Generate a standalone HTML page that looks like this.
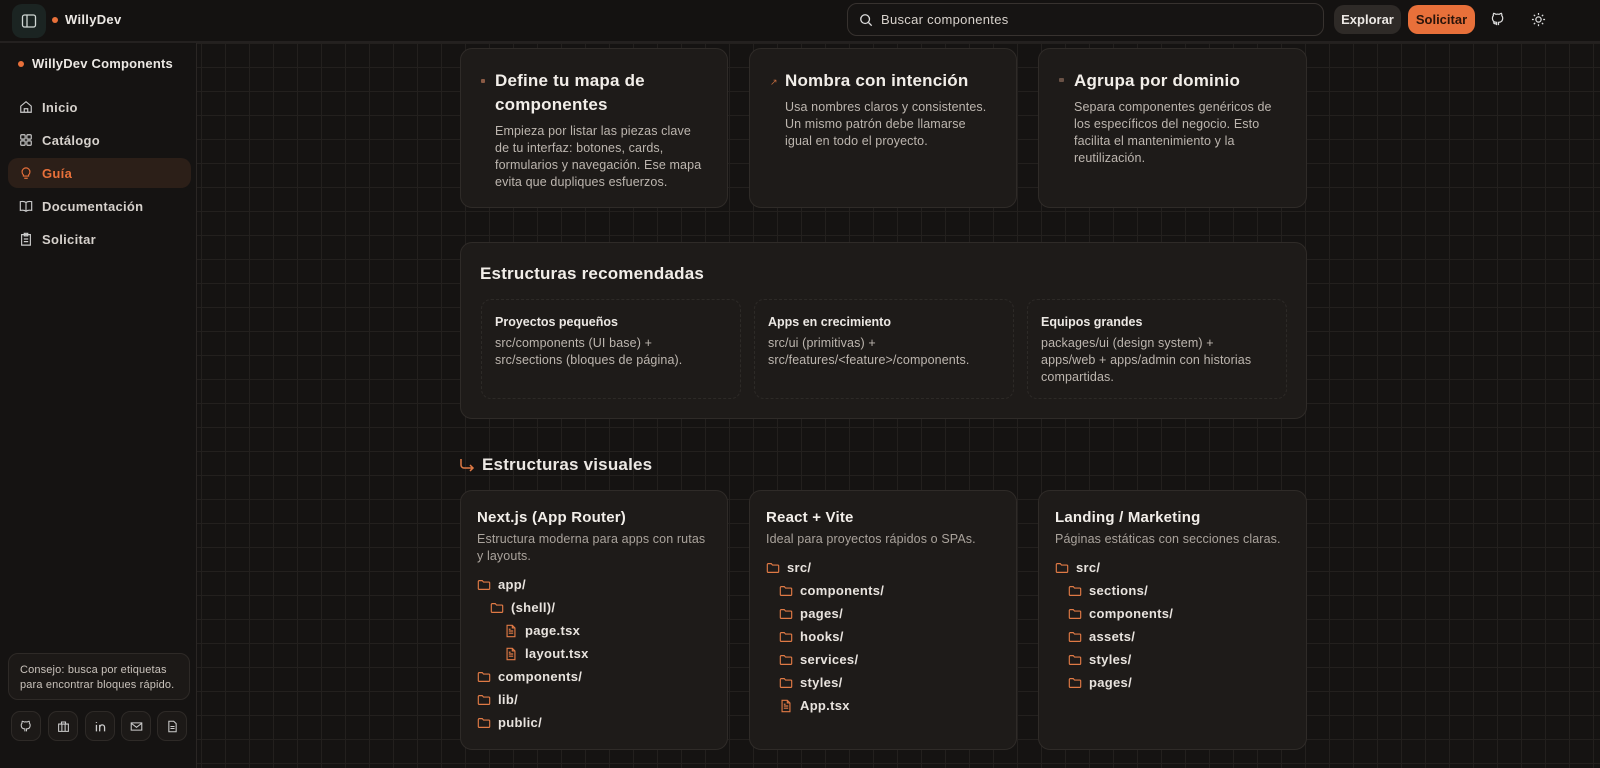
<!DOCTYPE html>
<html><head><meta charset="utf-8"><style>
*{box-sizing:border-box;margin:0;padding:0}
body{width:1600px;height:768px;overflow:hidden;background:#141211;font-family:"Liberation Sans",sans-serif;color:#ece8e4;position:relative}
.hdr{position:absolute;left:0;top:0;width:1600px;height:43px;background:#141211;border-bottom:2px solid #242120;z-index:2}
.side{position:absolute;left:0;top:43px;width:197px;height:725px;background:#151312;border-right:1px solid #2a2624}
.main{position:absolute;left:197px;top:43px;right:0;bottom:0;background-color:#151312;background-image:linear-gradient(#23201e 1px,transparent 1px),linear-gradient(90deg,#23201e 1px,transparent 1px);background-size:24px 24px;background-position:4px 0}
.card{position:absolute;background:#1e1b19;border:1px solid #2f2b28;border-radius:12px}
.dot{display:inline-block;width:6px;height:6px;border-radius:50%;background:#e8703a}
.nav{position:absolute;left:8px;width:183px;height:30px;display:flex;align-items:center;padding-left:11px;font-size:13px;font-weight:bold;color:#d6d1cc;border-radius:10px;letter-spacing:.3px}
.nav svg{margin-right:9px}
h3{font-size:17px;font-weight:bold;color:#f2eee9;line-height:24px;letter-spacing:.2px}
p.b{font-size:12.5px;line-height:17px;color:#bdb6af;letter-spacing:.12px}
.sub{position:absolute;top:56px;width:260px;height:100px;border:1px dashed #2d2a27;border-radius:10px;padding:15px 13px}
.sub h4{font-size:12.5px;font-weight:bold;margin-bottom:6px}
.tree{font-size:13px;font-weight:bold;line-height:23px;color:#e8e3de;letter-spacing:.3px}
.tree div{display:flex;align-items:center;height:23px}
.tree svg{margin-right:7px}
.ib{position:absolute;top:711px;width:30px;height:30px;border:1px solid #2e2a27;border-radius:9px;background:#1c1917;display:flex;align-items:center;justify-content:center}
</style></head><body>
<svg width="0" height="0" style="position:absolute"><defs>
<symbol id="fo" viewBox="0 0 16 16"><path d="M1.5 4a1 1 0 0 1 1-1h3.5l1.5 1.7h6a1 1 0 0 1 1 1V12a1 1 0 0 1-1 1h-11a1 1 0 0 1-1-1z" fill="none" stroke="#e07a45" stroke-width="1.3"/></symbol>
<symbol id="fi" viewBox="0 0 16 16"><path d="M3.5 1.5h6l3 3v10h-9z M9.5 1.5v3h3 M5.5 8h5 M5.5 10.5h5 M5.5 6h2" fill="none" stroke="#e07a45" stroke-width="1.3"/></symbol>
</defs></svg>
<div class="hdr">
 <div style="position:absolute;left:12px;top:4px;width:34px;height:34px;border-radius:10px;background:#1b2422;display:flex;align-items:center;justify-content:center"><svg width="16" height="16" viewBox="0 0 16 16"><rect x="1.5" y="2" width="13" height="12" rx="2" fill="none" stroke="#cfd6d4" stroke-width="1.3"/><path d="M6 2v12" stroke="#cfd6d4" stroke-width="1.3"/></svg></div>
 <span class="dot" style="position:absolute;left:52px;top:17px"></span>
 <div style="position:absolute;left:65px;top:12px;font-size:13px;font-weight:bold;letter-spacing:.3px">WillyDev</div>
 <div style="position:absolute;left:847px;top:3px;width:477px;height:33px;border:1px solid #37322f;border-radius:10px;background:#161413;display:flex;align-items:center;padding-left:11px;font-size:13px;color:#d8d2cc;letter-spacing:.3px"><svg width="14" height="14" viewBox="0 0 16 16" style="margin-right:8px"><circle cx="7" cy="7" r="5" fill="none" stroke="#ddd" stroke-width="1.5"/><path d="M11 11l3.5 3.5" stroke="#ddd" stroke-width="1.5"/></svg>Buscar componentes</div>
 <div style="position:absolute;left:1334px;top:5px;width:67px;height:29px;border-radius:10px;background:#2e2a27;font-size:13px;font-weight:bold;display:flex;align-items:center;justify-content:center">Explorar</div>
 <div style="position:absolute;left:1408px;top:5px;width:67px;height:29px;border-radius:10px;background:#e8703a;font-size:13px;font-weight:bold;color:#2a140a;display:flex;align-items:center;justify-content:center">Solicitar</div>
 <svg style="position:absolute;left:1491px;top:12px" width="15" height="15" viewBox="0 0 16 16"><path d="M6 14v-3c-3 0-4.5-1.5-4.5-4.5 0-1 .4-2 1-2.6-.2-.8 0-1.8.3-2.4 1 0 1.8.5 2.4 1a7 7 0 0 1 3.6 0c.6-.5 1.4-1 2.4-1 .3.6.5 1.6.3 2.4.6.6 1 1.6 1 2.6 0 3-1.5 4.5-4.5 4.5v3 M6 12.5c-2 .5-3-.5-3.5-1.5" fill="none" stroke="#ddd" stroke-width="1.3"/></svg>
 <svg style="position:absolute;left:1531px;top:12px" width="15" height="15" viewBox="0 0 16 16"><circle cx="8" cy="8" r="2.8" fill="none" stroke="#ddd" stroke-width="1.3"/><path d="M8 1v2M8 13v2M1 8h2M13 8h2M3 3l1.4 1.4M11.6 11.6L13 13M3 13l1.4-1.4M11.6 4.4L13 3" stroke="#ddd" stroke-width="1.3"/></svg>
</div>
<div class="side">
 <span class="dot" style="position:absolute;left:18px;top:18px"></span>
 <div style="position:absolute;left:32px;top:13px;font-size:13px;font-weight:bold;letter-spacing:.2px">WillyDev Components</div>
 <div class="nav" style="top:49px"><svg width="14" height="14" viewBox="0 0 16 16"><path d="M2 7l6-5 6 5v7H2z M6 14v-4h4v4" fill="none" stroke="#ccc" stroke-width="1.3"/></svg>Inicio</div>
 <div class="nav" style="top:82px"><svg width="14" height="14" viewBox="0 0 16 16"><g fill="none" stroke="#ccc" stroke-width="1.3"><rect x="2" y="2" width="5" height="5" rx="1"/><rect x="9" y="2" width="5" height="5" rx="1"/><rect x="2" y="9" width="5" height="5" rx="1"/><rect x="9" y="9" width="5" height="5" rx="1"/></g></svg>Catálogo</div>
 <div class="nav" style="top:115px;background:#2c1f18;color:#e8703a"><svg width="14" height="14" viewBox="0 0 16 16"><path d="M5 10a4.5 4.5 0 1 1 6 0v1.5H5z M6 14h4" fill="none" stroke="#e8703a" stroke-width="1.3"/></svg>Guía</div>
 <div class="nav" style="top:148px"><svg width="14" height="14" viewBox="0 0 16 16"><path d="M8 4c-2-1.5-4-1.5-6.5-1v10c2.5-.5 4.5-.5 6.5 1 2-1.5 4-1.5 6.5-1V3C12 2.5 10 2.5 8 4zv10" fill="none" stroke="#ccc" stroke-width="1.3"/></svg>Documentación</div>
 <div class="nav" style="top:181px"><svg width="14" height="14" viewBox="0 0 16 16"><path d="M3 3h10v12H3z M6 1.5h4v3H6z M5.5 8h5M5.5 11h5" fill="none" stroke="#ccc" stroke-width="1.3"/></svg>Solicitar</div>
 <div style="position:absolute;left:8px;top:610px;width:182px;height:47px;border:1px solid #2e2a27;border-radius:10px;background:#1c1917;padding:9px 11px;font-size:11px;line-height:15px;color:#c9c2bb;letter-spacing:.15px">Consejo: busca por etiquetas para encontrar bloques rápido.</div>
</div>
<div class="ib" style="left:11px"><svg width="13" height="13" viewBox="0 0 16 16"><path d="M6 14v-3c-3 0-4.5-1.5-4.5-4.5 0-1 .4-2 1-2.6-.2-.8 0-1.8.3-2.4 1 0 1.8.5 2.4 1a7 7 0 0 1 3.6 0c.6-.5 1.4-1 2.4-1 .3.6.5 1.6.3 2.4.6.6 1 1.6 1 2.6 0 3-1.5 4.5-4.5 4.5v3" fill="none" stroke="#ccc" stroke-width="1.3"/></svg></div>
<div class="ib" style="left:48px"><svg width="13" height="13" viewBox="0 0 16 16"><path d="M2 5h12v9H2z M5.5 5V2.5h5V5 M6 5v9M10 5v9" fill="none" stroke="#ccc" stroke-width="1.3"/></svg></div>
<div class="ib" style="left:85px"><svg width="13" height="13" viewBox="0 0 16 16"><path d="M3 6v8M3 2.5v1M7 14V6M7 9.5c0-2 1.5-3.5 3-3.5s3 1 3 3v5" fill="none" stroke="#ccc" stroke-width="1.6"/></svg></div>
<div class="ib" style="left:121px"><svg width="13" height="13" viewBox="0 0 16 16"><path d="M1.5 3.5h13v9h-13z M1.5 4l6.5 5 6.5-5" fill="none" stroke="#ccc" stroke-width="1.3"/></svg></div>
<div class="ib" style="left:157px"><svg width="13" height="13" viewBox="0 0 16 16"><path d="M3.5 1.5h6l3 3v10h-9z M5.5 8h5M5.5 10.5h5" fill="none" stroke="#ccc" stroke-width="1.3"/></svg></div>

<div class="main"></div>

<div class="card" style="left:460px;top:48px;width:268px;height:160px;padding:20px 14px 0 34px">
 <span style="position:absolute;left:20px;top:30px;width:4px;height:4px;background:#8a5a44;border-radius:1px"></span>
 <h3>Define tu mapa de<br>componentes</h3>
 <p class="b" style="margin-top:6px">Empieza por listar las piezas clave<br>de tu interfaz: botones, cards,<br>formularios y navegación. Ese mapa<br>evita que dupliques esfuerzos.</p>
</div>
<div class="card" style="left:749px;top:48px;width:268px;height:160px;padding:20px 20px 0 35px">
 <span style="position:absolute;left:20px;top:28px;font-size:9px;color:#c06a3e">↗</span>
 <h3>Nombra con intención</h3>
 <p class="b" style="margin-top:6px">Usa nombres claros y consistentes.<br>Un mismo patrón debe llamarse<br>igual en todo el proyecto.</p>
</div>
<div class="card" style="left:1038px;top:48px;width:269px;height:160px;padding:20px 20px 0 35px">
 <span style="position:absolute;left:20px;top:29px;width:5px;height:4px;background:#6a5246;border-radius:1px"></span>
 <h3>Agrupa por dominio</h3>
 <p class="b" style="margin-top:6px">Separa componentes genéricos de<br>los específicos del negocio. Esto<br>facilita el mantenimiento y la<br>reutilización.</p>
</div>

<div class="card" style="left:460px;top:242px;width:847px;height:177px">
 <h3 style="position:absolute;left:19px;top:19px">Estructuras recomendadas</h3>
 <div class="sub" style="left:20px"><h4>Proyectos pequeños</h4><p class="b">src/components (UI base) +<br>src/sections (bloques de página).</p></div>
 <div class="sub" style="left:293px"><h4>Apps en crecimiento</h4><p class="b">src/ui (primitivas) +<br>src/features/&lt;feature&gt;/components.</p></div>
 <div class="sub" style="left:566px"><h4>Equipos grandes</h4><p class="b">packages/ui (design system) +<br>apps/web + apps/admin con historias<br>compartidas.</p></div>
</div>

<svg style="position:absolute;left:459px;top:457px" width="16" height="16" viewBox="0 0 16 16"><path d="M2 2v6a3 3 0 0 0 3 3h9M11 8l3 3-3 3" fill="none" stroke="#e07a45" stroke-width="1.5"/></svg>
<div style="position:absolute;left:482px;top:455px;font-size:17px;font-weight:bold;letter-spacing:.2px">Estructuras visuales</div>

<div class="card" style="left:460px;top:490px;width:268px;height:260px;padding:17px 12px 17px 16px">
 <h3 style="font-size:15px;line-height:20px">Next.js (App Router)</h3>
 <p class="b" style="margin:3px 0 8px;color:#aaa39c">Estructura moderna para apps con rutas<br>y layouts.</p>
 <div class="tree">
  <div><svg width="14" height="14"><use href="#fo"/></svg>app/</div>
  <div style="padding-left:13px"><svg width="14" height="14"><use href="#fo"/></svg>(shell)/</div>
  <div style="padding-left:27px"><svg width="14" height="14"><use href="#fi"/></svg>page.tsx</div>
  <div style="padding-left:27px"><svg width="14" height="14"><use href="#fi"/></svg>layout.tsx</div>
  <div><svg width="14" height="14"><use href="#fo"/></svg>components/</div>
  <div><svg width="14" height="14"><use href="#fo"/></svg>lib/</div>
  <div><svg width="14" height="14"><use href="#fo"/></svg>public/</div>
 </div>
</div>
<div class="card" style="left:749px;top:490px;width:268px;height:260px;padding:17px 16px">
 <h3 style="font-size:15px;line-height:20px">React + Vite</h3>
 <p class="b" style="margin:3px 0 8px;color:#aaa39c">Ideal para proyectos rápidos o SPAs.</p>
 <div class="tree">
  <div><svg width="14" height="14"><use href="#fo"/></svg>src/</div>
  <div style="padding-left:13px"><svg width="14" height="14"><use href="#fo"/></svg>components/</div>
  <div style="padding-left:13px"><svg width="14" height="14"><use href="#fo"/></svg>pages/</div>
  <div style="padding-left:13px"><svg width="14" height="14"><use href="#fo"/></svg>hooks/</div>
  <div style="padding-left:13px"><svg width="14" height="14"><use href="#fo"/></svg>services/</div>
  <div style="padding-left:13px"><svg width="14" height="14"><use href="#fo"/></svg>styles/</div>
  <div style="padding-left:13px"><svg width="14" height="14"><use href="#fi"/></svg>App.tsx</div>
 </div>
</div>
<div class="card" style="left:1038px;top:490px;width:269px;height:260px;padding:17px 16px">
 <h3 style="font-size:15px;line-height:20px">Landing / Marketing</h3>
 <p class="b" style="margin:3px 0 8px;color:#aaa39c">Páginas estáticas con secciones claras.</p>
 <div class="tree">
  <div><svg width="14" height="14"><use href="#fo"/></svg>src/</div>
  <div style="padding-left:13px"><svg width="14" height="14"><use href="#fo"/></svg>sections/</div>
  <div style="padding-left:13px"><svg width="14" height="14"><use href="#fo"/></svg>components/</div>
  <div style="padding-left:13px"><svg width="14" height="14"><use href="#fo"/></svg>assets/</div>
  <div style="padding-left:13px"><svg width="14" height="14"><use href="#fo"/></svg>styles/</div>
  <div style="padding-left:13px"><svg width="14" height="14"><use href="#fo"/></svg>pages/</div>
 </div>
</div>
</body></html>
